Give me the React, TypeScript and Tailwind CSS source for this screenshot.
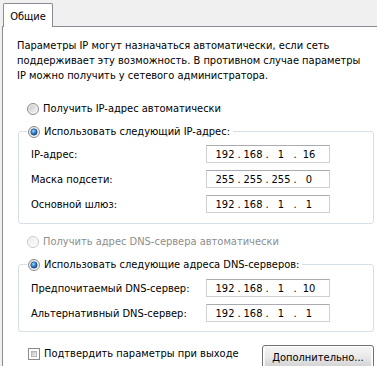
import React from "react";

function Radio({ checked = false, disabled = false, id }: { checked?: boolean; disabled?: boolean; id: string }) {
  return (
    <svg width="12" height="12" viewBox="0 0 12 12" className="shrink-0">
      <defs>
        <linearGradient id={`bg-${id}`} x1="0" y1="0" x2="1" y2="1">
          <stop offset="0" stopColor={disabled ? "#f4f4f4" : "#e2e2e2"} />
          <stop offset="1" stopColor="#ffffff" />
        </linearGradient>
        <linearGradient id={`in-${id}`} x1="0" y1="0" x2="1" y2="1">
          <stop offset="0" stopColor={disabled ? "#ececec" : "#c9c9c9"} />
          <stop offset="1" stopColor={disabled ? "#fbfbfb" : "#f4f4f4"} />
        </linearGradient>
        <radialGradient id={`dot-${id}`} cx="0.4" cy="0.35" r="0.7">
          <stop offset="0" stopColor="#a9dcff" />
          <stop offset="0.45" stopColor="#3c8ad6" />
          <stop offset="1" stopColor="#0d3a72" />
        </radialGradient>
      </defs>
      <circle cx="6" cy="6" r="5.5" fill={`url(#bg-${id})`} stroke={disabled ? "#c8c8c8" : "#8a8a8a"} strokeWidth="1" />
      {checked ? (
        <circle cx="6" cy="6" r="3.2" fill={`url(#dot-${id})`} stroke="#1c4a80" strokeWidth="0.6" />
      ) : (
        <circle cx="6" cy="6" r="3.8" fill={`url(#in-${id})`} />
      )}
    </svg>
  );
}

function Checkbox() {
  return (
    <span className="w-[12px] h-[12px] shrink-0 border border-[#8a8a8a] bg-white p-[2px] flex">
      <span className="flex-1 bg-gradient-to-br from-[#c4c4c4] to-[#f2f2f2] border border-[#b8b8b8]" />
    </span>
  );
}

function IpBox({ parts }: { parts: string[] }) {
  return (
    <div className="w-[124px] h-[18px] border border-[#cfd1d4] border-t-[#a9abb0] bg-white flex items-center pl-[7px]">
      {parts.map((p, i) => (
        <React.Fragment key={i}>
          <span className="w-[22px] text-center">{p}</span>
          {i < 3 && <span className="w-[6px] text-center">.</span>}
        </React.Fragment>
      ))}
    </div>
  );
}

function Row({ label, parts }: { label: string; parts: string[] }) {
  return (
    <div className="flex items-center h-[18px]">
      <span className="w-[175px] whitespace-nowrap">{label}</span>
      <IpBox parts={parts} />
    </div>
  );
}

export default function App() {
  return (
    <div className="w-[377px] h-[366px] overflow-hidden bg-[#f0f0f0] font-['DejaVu_Sans_Condensed','DejaVu_Sans',sans-serif] text-[11px] leading-[15px] text-black">
      <div className="h-[26px] flex items-end pl-[3px]">
        <div className="relative z-10 -mb-px h-[24px] w-[50px] bg-white border border-b-0 border-[#898c95] rounded-t-[2px] flex items-center justify-center pt-[2px]">
          Общие
        </div>
      </div>
      <div className="ml-[2px] h-[340px] border-l border-t border-[#898c95] bg-white pl-[14px] pr-[3px] pt-[11px]">
        <div className="whitespace-nowrap">
          <div>Параметры IP могут назначаться автоматически, если сеть</div>
          <div>поддерживает эту возможность. В противном случае параметры</div>
          <div>IP можно получить у сетевого администратора.</div>
        </div>

        <div className="mt-[18px] h-[15px] flex items-center pl-[10px] gap-[4px]">
          <Radio id="r1" />
          <span>Получить IP-адрес автоматически</span>
        </div>

        <fieldset className="mt-[8px] ml-[1px] border border-[#d5dfe5] rounded-[3px] pl-[12px] pt-[6px] pb-[10px]">
          <legend className="ml-[-4px] pl-[1px] pr-[3px] h-[15px] flex items-center gap-[4px]">
            <Radio id="r2" checked />
            <span>Использовать следующий IP-адрес:</span>
          </legend>
          <div className="flex flex-col gap-[7px]">
            <Row label="IP-адрес:" parts={["192", "168", "1", "16"]} />
            <Row label="Маска подсети:" parts={["255", "255", "255", "0"]} />
            <Row label="Основной шлюз:" parts={["192", "168", "1", "1"]} />
          </div>
        </fieldset>

        <div className="mt-[10px] h-[15px] flex items-center pl-[10px] gap-[4px] text-[#8d8d8d]">
          <Radio id="r3" disabled />
          <span>Получить адрес DNS-сервера автоматически</span>
        </div>

        <fieldset className="mt-[8px] ml-[1px] border border-[#d5dfe5] rounded-[3px] pl-[12px] pt-[7px] pb-[9px]">
          <legend className="ml-[-4px] pl-[1px] pr-[3px] h-[15px] flex items-center gap-[4px]">
            <Radio id="r4" checked />
            <span>Использовать следующие адреса DNS-серверов:</span>
          </legend>
          <div className="flex flex-col gap-[7px]">
            <Row label="Предпочитаемый DNS-сервер:" parts={["192", "168", "1", "10"]} />
            <Row label="Альтернативный DNS-сервер:" parts={["192", "168", "1", "1"]} />
          </div>
        </fieldset>

        <div className="mt-[13px] flex items-start justify-between">
          <div className="mt-[1px] h-[15px] flex items-center pl-[11px] gap-[4px]">
            <Checkbox />
            <span>Подтвердить параметры при выходе</span>
          </div>
          <div className="w-[112px] h-[24px] rounded-[3px] border border-[#707070] p-px">
            <div className="h-full rounded-[2px] border border-white/70 bg-gradient-to-b from-[#f3f3f3] via-[#e9e9e9] to-[#d4d4d4] flex items-center justify-center">
              Дополнительно...
            </div>
          </div>
        </div>
      </div>
    </div>
  );
}
